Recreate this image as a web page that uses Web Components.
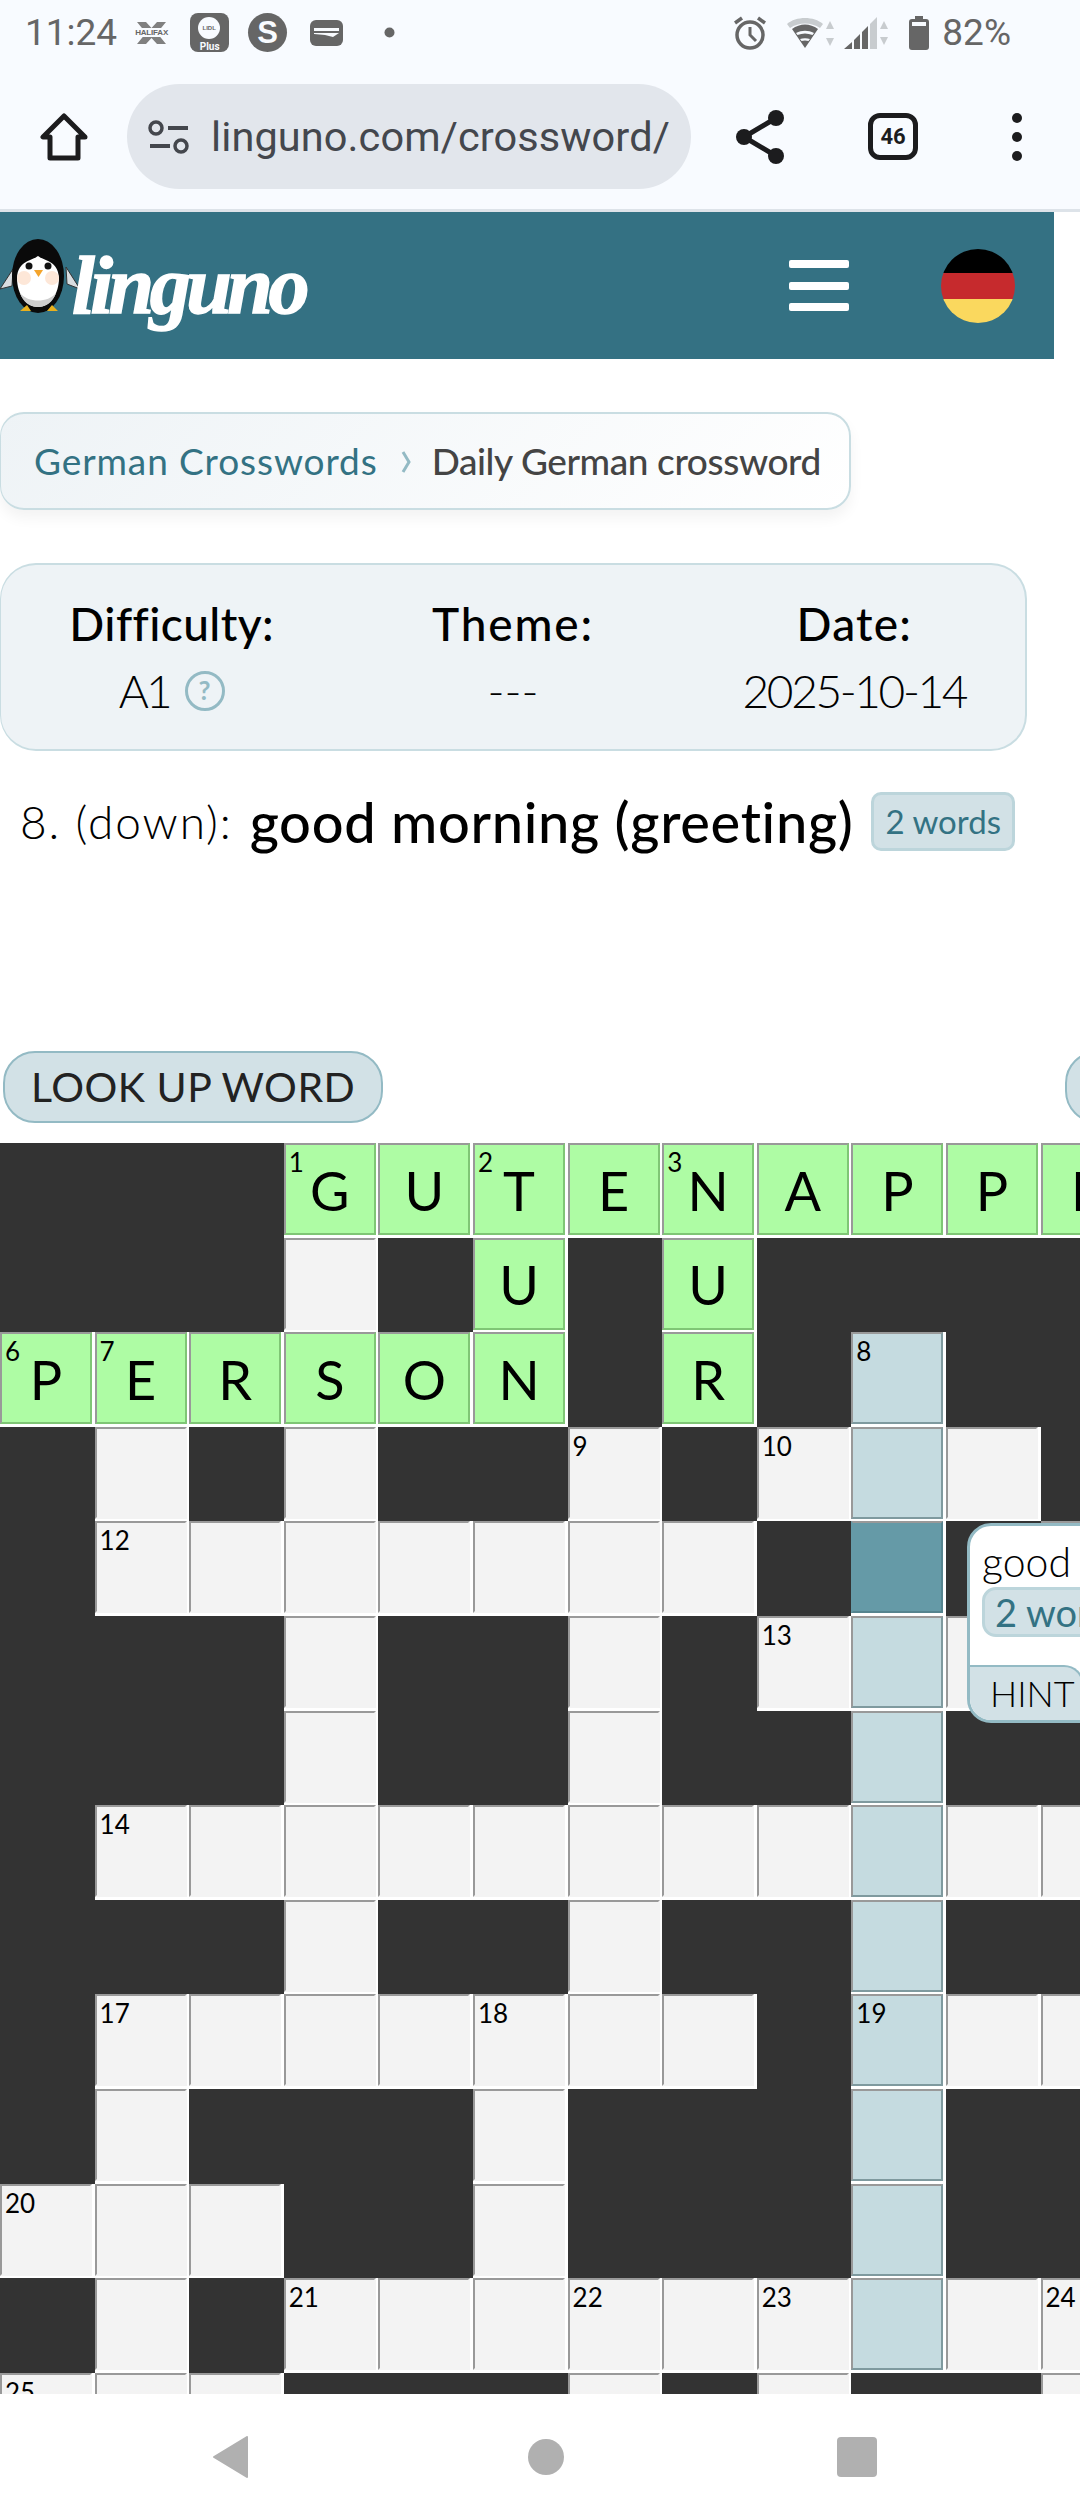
<!DOCTYPE html>
<html>
<head>
<meta charset="utf-8">
<style>
html, body { margin: 0; padding: 0; background: #fff; }
body { width: 1080px; height: 2520px; overflow: hidden; display: flex; flex-direction: column; font-family: "Lato", "Noto Sans", sans-serif; color: #000; }
x-page { display: block; flex: 1; min-height: 0; overflow: hidden; }
</style>
</head>
<body>
<x-statusbar></x-statusbar>
<x-toolbar></x-toolbar>
<x-page>
    <x-siteheader></x-siteheader>
    <x-breadcrumbs></x-breadcrumbs>
    <x-infobox></x-infobox>
    <x-clue></x-clue>
    <x-actions></x-actions>
    <x-crossword></x-crossword>
</x-page>
<x-navbar></x-navbar>
<script>
class XStatusbar extends HTMLElement {
    connectedCallback() {
        this.attachShadow({ mode: 'open' });
        this.shadowRoot.innerHTML = `
            <style>
                :host { display: flex; align-items: center; height: 65px; background: #f8fbff; color: #666; font-family: "Roboto", sans-serif; font-size: 37px; position: relative; }
                .left, .right { display: flex; align-items: center; }
                .left { padding-left: 25px; }
                .right { margin-left: auto; padding-right: 69px; }
                svg { display: block; flex: none; }
                .hal { position: relative; width: 33px; height: 22px; margin-left: 18px; }
                .hal span { position: absolute; left: 0; right: 0; top: 6px; text-align: center; font: bold 8px "Liberation Sans", sans-serif; background: #f8fbff; color: #666; letter-spacing: -.2px; }
                .lidl { position: relative; margin-left: 22px; width: 39px; height: 39px; background: #666; border-radius: 8px; }
                .lidl i { position: absolute; left: 8px; top: 4px; width: 22px; height: 22px; background: #f8fbff; border-radius: 50%; font: bold 6px/22px "Liberation Sans", sans-serif; color: #666; text-align: center; }
                .lidl b { position: absolute; left: 0; right: 0; bottom: 0; text-align: center; font: bold 10px "Roboto", sans-serif; color: #f8fbff; }
                .s { margin-left: 19px; width: 39px; height: 39px; border-radius: 50%; background: #666; color: #f8fbff; font: bold 31px/39px "Liberation Sans", sans-serif; text-align: center; }
            </style>
            <div class="left">
                <span>11:24</span>
                <div class="hal">
                    <svg width="33" height="22" viewBox="0 0 33 22"><path d="M2 0h9l5.500 6 5.500-6h9L22 11l9 11h-9l-5.500-6-5.500 6H2l9-11z" fill="#808080"/></svg>
                    <span>HALIFAX</span>
                </div>
                <div class="lidl"><i>LIDL</i><b>Plus</b></div>
                <div class="s">S</div>
                <svg style="margin-left:23px" width="33" height="26" viewBox="0 0 33 26"><rect width="33" height="26" rx="6" fill="#666"/><path d="M4 8h25v3H4zM4 13h25l-6 4-8-2-11-1z" fill="#f8fbff"/></svg>
                <svg style="margin-left:41px" width="11" height="11" viewBox="0 0 11 11"><circle cx="5.500" cy="5.500" r="5" fill="#666"/></svg>
            </div>
            <div class="right">
                <svg width="32" height="34" viewBox="0 0 32 34"><circle cx="16" cy="19" r="13" fill="none" stroke="#666" stroke-width="3.500"/><path d="M16 11v8l6 6" fill="none" stroke="#666" stroke-width="3"/><path d="M1 7l7-5M31 7l-7-5" stroke="#666" stroke-width="3.500"/></svg>
                <svg style="margin-left:21px" width="48" height="32" viewBox="0 0 48 32"><path d="M0 7C9-1 27-1 36 7l-3 4C24 5 12 5 3 11z" fill="#c8cccf"/><path d="M5 12c8-6 18-6 26 0L18 31z" fill="#666"/><path d="M9 16c6-3 12-3 18 0l-1.500 2c-5-2-10-2-15 0zM13 22c3-1 7-1 10 0l-1.500 2c-2-.7-5-.7-7 0z" fill="#f8fbff"/><path d="M43 4l4 8h-8zM43 29l4-8h-8z" fill="#c8cccf"/></svg>
                <svg style="margin-left:9px" width="45" height="34" viewBox="0 0 45 34"><path d="M0 33L8 26v7zM10 24l6-6v15h-6zM18 16l6-6v23h-6z" fill="#666"/><path d="M26 8l7-7v32h-7z" fill="#c8cccf"/><path d="M40 5l4 8h-8zM40 29l4-8h-8z" fill="#c8cccf"/></svg>
                <svg style="margin-left:20px" width="20" height="34" viewBox="0 0 20 34"><path d="M6 0h8v3h3a3 3 0 0 1 3 3v25a3 3 0 0 1-3 3H3a3 3 0 0 1-3-3V6a3 3 0 0 1 3-3h3z" fill="#666"/><rect x="3" y="6" width="14" height="4" fill="#f8fbff"/></svg>
                <span style="margin-left:13px">82%</span>
            </div>
        `;
    }
}

class XToolbar extends HTMLElement {
    connectedCallback() {
        this.attachShadow({ mode: 'open' });
        this.shadowRoot.innerHTML = `
            <style>
                :host { display: flex; align-items: center; box-sizing: border-box; height: 147px; padding-bottom: 1px; background: #f8fbff; border-bottom: 3px solid #dde3e9; position: relative; font-family: "Roboto", sans-serif; }
                svg { display: block; flex: none; }
                .pill { display: flex; align-items: center; margin-left: 39px; width: 564px; height: 105px; box-sizing: border-box; padding-left: 21px; border-radius: 53px; background: #e2e6ec; color: #44474d; font-size: 41.500px; letter-spacing: .1px; white-space: nowrap; overflow: hidden; }
                .pill span { margin-left: 21px; }
                .tabs { position: relative; margin-left: 84px; width: 50px; height: 47px; box-sizing: border-box; border: 5px solid #1c1c1e; border-radius: 12px; font-weight: 700; font-size: 22px; line-height: 37px; text-align: center; color: #1c1c1e; }
            </style>
            <svg style="margin-left:40px" width="48" height="48" viewBox="0 0 48 48"><path d="M24 3L3 24h7v21h28V24h7z" fill="none" stroke="#1c1c1e" stroke-width="5" stroke-linejoin="round"/></svg>
            <div class="pill">
                <svg width="42" height="34" viewBox="0 0 42 34"><circle cx="8" cy="8" r="6" fill="none" stroke="#44474d" stroke-width="3.500"/><path d="M20 8h20M2 26h20" stroke="#44474d" stroke-width="4"/><circle cx="33" cy="26" r="6" fill="none" stroke="#44474d" stroke-width="3.500"/></svg>
                <span>linguno.com/crossword/</span>
            </div>
            <svg style="margin-left:45px" width="48" height="54" viewBox="0 0 48 54"><path d="M40 8L8 27l32 19" fill="none" stroke="#1c1c1e" stroke-width="5"/><circle cx="40" cy="8" r="8" fill="#1c1c1e"/><circle cx="8" cy="27" r="8" fill="#1c1c1e"/><circle cx="40" cy="46" r="8" fill="#1c1c1e"/></svg>
            <div class="tabs">46</div>
            <svg style="margin-left:94px" width="10" height="48" viewBox="0 0 10 48"><circle cx="5" cy="5" r="5" fill="#1c1c1e"/><circle cx="5" cy="24" r="5" fill="#1c1c1e"/><circle cx="5" cy="43" r="5" fill="#1c1c1e"/></svg>
        `;
    }
}

class XSiteheader extends HTMLElement {
    connectedCallback() {
        this.attachShadow({ mode: 'open' });
        this.shadowRoot.innerHTML = `
            <style>
                :host { display: flex; align-items: center; width: 1054px; height: 147px; background: #347183; position: relative; }
                .logo { position: relative; width: 310px; height: 147px; flex: none; }
                .logo svg { position: absolute; left: 0; top: 24px; }
                .word { position: absolute; left: 72px; top: 20px; font: italic bold 82px/108px "Liberation Serif", serif; color: #fff; letter-spacing: -4.500px; -webkit-text-stroke: 1.500px #fff; }
                .menu { margin-left: 479px; width: 60px; display: flex; flex-direction: column; gap: 13.500px; }
                .menu i { display: block; height: 8px; border-radius: 2px; background: #fff; }
                .flag { margin-left: 92px; width: 74px; height: 74px; border-radius: 50%; background: linear-gradient(#000 32.500%, #c62a2d 32.500%, #c62a2d 67.500%, #fad85e 67.500%); }
            </style>
            <div class="logo">
                <svg width="85" height="80" viewBox="0 0 85 80">
                    <path d="M13 33L0 53l12-3zM66 31l14 22-13-5z" fill="#d9dde0" stroke="#333" stroke-width="1"/>
                    <ellipse cx="38" cy="40" rx="26" ry="37" fill="#0a0a0a"/>
                    <path d="M38 20c-6 5-20 4-21 22 0 16 9 29 21 29s21-13 21-29c-1-18-15-17-21-22z" fill="#fff"/>
                    <path d="M20 57c8 10 28 10 36 0-3 9-10 14-18 14s-15-5-18-14z" fill="#cfcfcf"/>
                    <circle cx="24" cy="42" r="7" fill="#fde7d8"/><circle cx="52" cy="42" r="7" fill="#fde7d8"/>
                    <circle cx="29" cy="30" r="3.500" fill="#111"/><circle cx="48" cy="30" r="3.500" fill="#111"/>
                    <path d="M34 34h9l-4.500 7z" fill="#f4a42c"/>
                    <path d="M20 75h11l-4-6zM47 75h11l-6-6z" fill="#e8b01e"/>
                </svg>
                <span class="word">linguno</span>
            </div>
            <div class="menu"><i></i><i></i><i></i></div>
            <div class="flag"></div>
        `;
    }
}

class XBreadcrumbs extends HTMLElement {
    connectedCallback() {
        this.attachShadow({ mode: 'open' });
        this.shadowRoot.innerHTML = `
            <style>
                :host { display: flex; align-items: center; box-sizing: border-box; width: 851px; height: 98px; margin-top: 53px; padding: 0 0 2px 33px; border: 2px solid #c9dde2; border-left-width: 1px; border-radius: 24px; background: linear-gradient(135deg, #eef3f6, #fff); box-shadow: 0 8px 14px rgba(0,0,0,.05); font-size: 37px; white-space: nowrap; }
                a { color: #337283; letter-spacing: .9px; }
                svg { display: block; flex: none; margin: 4px 21px 0 23px; }
                span { color: #444; font-weight: 500; letter-spacing: -.4px; }
            </style>
            <a>German Crosswords</a>
            <svg width="10" height="24" viewBox="0 0 10 24"><path d="M2 2l6 10-6 10" fill="none" stroke="#93bac4" stroke-width="3"/></svg>
            <span>Daily German crossword</span>
        `;
    }
}

class XInfobox extends HTMLElement {
    connectedCallback() {
        this.attachShadow({ mode: 'open' });
        this.shadowRoot.innerHTML = `
            <style>
                :host { display: grid; grid-template-columns: repeat(3, 1fr); align-content: center; row-gap: 15px; box-sizing: border-box; width: 1027px; height: 188px; margin-top: 53px; border: 2px solid #c9dde2; border-left-width: 1px; border-radius: 36px; background: #eef3f6; font-size: 46px; line-height: 52px; text-align: center; }
                b { font-weight: 500; }
                b.d { letter-spacing: .4px; }
                b.t { letter-spacing: 1.800px; }
                b.a { letter-spacing: 1.200px; }
                span { font-weight: 300; display: flex; justify-content: center; align-items: center; gap: 15px; }
                span em { font-style: normal; letter-spacing: -3px; }
                span.date { letter-spacing: -2.400px; }
                i { display: inline-block; box-sizing: border-box; width: 40px; height: 40px; border: 3.500px solid #93bac4; border-radius: 50%; font: bold 26px/33px "Lato", sans-serif; color: #93bac4; }
            </style>
            <b class="d">Difficulty:</b><b class="t">Theme:</b><b class="a">Date:</b>
            <span><em>A1</em><i>?</i></span><span>---</span><span class="date">2025-10-14</span>
        `;
    }
}

class XBadge extends HTMLElement {
    connectedCallback() {
        this.attachShadow({ mode: 'open' });
        this.shadowRoot.innerHTML = `
            <style>
                :host { display: inline-block; box-sizing: border-box; height: 59px; padding: 0 11px; border: 3px solid #bcd5db; border-radius: 10px; background: #d2e1e6; color: #337283; font-size: 33px; line-height: 53px; white-space: nowrap; }
            </style>
            <slot></slot>
        `;
    }
}

class XClue extends HTMLElement {
    connectedCallback() {
        this.attachShadow({ mode: 'open' });
        this.shadowRoot.innerHTML = `
            <style>
                :host { display: flex; align-items: center; height: 59px; margin-top: 41px; padding-left: 20px; white-space: nowrap; }
                .n { font-size: 46px; font-weight: 300; letter-spacing: 1.900px; }
                .t { margin-left: 17px; font-size: 56px; font-weight: 500; letter-spacing: .65px; }
                x-badge { margin-left: 18px; }
            </style>
            <span class="n">8. (down):</span><span class="t">good morning (greeting)</span><x-badge>2 words</x-badge>
        `;
    }
}

class XPillbutton extends HTMLElement {
    connectedCallback() {
        this.attachShadow({ mode: 'open' });
        this.shadowRoot.innerHTML = `
            <style>
                :host { display: block; flex: none; box-sizing: border-box; height: 72px; padding: 0 26px; border: 2px solid #93bac4; border-radius: 32px; background: #d2e1e6; color: #222; font-size: 41px; letter-spacing: .5px; line-height: 68px; white-space: nowrap; }
            </style>
            <slot></slot>
        `;
    }
}

class XActions extends HTMLElement {
    connectedCallback() {
        this.attachShadow({ mode: 'open' });
        this.shadowRoot.innerHTML = `
            <style>
                :host { display: flex; justify-content: space-between; width: 1277px; margin-top: 200px; padding-left: 3px; }
                x-pillbutton.next { width: 215px; }
            </style>
            <x-pillbutton>LOOK UP WORD</x-pillbutton>
            <x-pillbutton class="next"></x-pillbutton>
        `;
    }
}

class XCell extends HTMLElement {
    connectedCallback() {
        const type = this.getAttribute('t') || 'x';
        this.attachShadow({ mode: 'open' });
        this.shadowRoot.innerHTML = `
            <style>
                :host { display: block; position: relative; box-sizing: border-box; min-width: 0; min-height: 0; background: #333; }
                :host([t="w"]), :host([t="g"]), :host([t="b"]), :host([t="a"]) { background: #fff; padding: 0 2.500px 2.500px 0; }
                .in { display: flex; align-items: center; justify-content: center; box-sizing: border-box; height: 100%; padding-top: 3px; border-style: solid; border-width: 2px; border-top-color: #999; border-left-color: #999; font-size: 54px; line-height: 1; color: #000; }
                :host([t="w"]) .in { background: #f3f3f3; border-right-color: #f3f3f3; border-bottom-color: #f3f3f3; }
                :host([t="g"]) .in { background: #aefca4; border-right-color: #7fc675; border-bottom-color: #7fc675; }
                :host([t="b"]) .in { background: #c5dbe0; border-right-color: #7f9a9f; border-bottom-color: #7f9a9f; }
                :host([t="a"]) .in { background: #659aa7; border-color: #659aa7 #55848f #55848f #659aa7; border-top-color: #999; }
                sup { position: absolute; left: 5px; top: 6px; font-size: 26px; line-height: 26px; vertical-align: baseline; }
            </style>
            ${type === 'x' ? '' : `<div class="in">${this.getAttribute('l') || ''}</div>`}
            ${this.getAttribute('n') ? `<sup>${this.getAttribute('n')}</sup>` : ''}
        `;
    }
}

class XHintpopup extends HTMLElement {
    connectedCallback() {
        this.attachShadow({ mode: 'open' });
        this.shadowRoot.innerHTML = `
            <style>
                :host { display: flex; flex-direction: column; position: absolute; left: 967px; top: 380px; width: 400px; height: 200px; box-sizing: border-box; border: 3px solid #93bac4; border-radius: 24px; background: #fff; overflow: hidden; }
                .top { flex: 1; padding: 14px 12px 0; }
                .w { font-size: 41px; font-weight: 300; line-height: 44px; margin-bottom: 3px; }
                x-badge { height: 50px; line-height: 44px; padding: 0 10px; font-size: 38px; border-radius: 14px; }
                .hint { width: 114px; height: 55px; box-sizing: border-box; border-top: 2px solid #93bac4; border-right: 2px solid #93bac4; border-top-right-radius: 20px; background: #d2e1e6; padding-left: 20px; font-size: 36px; font-weight: 300; line-height: 52px; }
            </style>
            <div class="top"><div class="w">good</div><x-badge>2 words</x-badge></div>
            <div class="hint">HINT</div>
        `;
    }
}

const CELLS = [
    'x x x G1 U T2 E N3 A P P E',
    'x x x w x g:U x g:U x x x x',
    'P6 E7 R S O N x g:R x b8 x x',
    'x w x w x x w9 x w10 b w x',
    'x w12 w w w w w w x a x w',
    'x x x w x x w x w13 b w x',
    'x x x w x x w x x b x x',
    'x w14 w w w w w w w b w w',
    'x x x w x x w x x b x x',
    'x w17 w w w w18 w w x b19 w w',
    'x w x x x w x x x b x x',
    'w20 w w x x w x x x b x x',
    'x w x w21 w w w22 w w23 b w w24',
    'w25 w w x x x w x w x x w'
];

class XCrossword extends HTMLElement {
    connectedCallback() {
        this.attachShadow({ mode: 'open' });
        let cells = '';
        CELLS.forEach((row) => {
            row.split(' ').forEach((c) => {
                let m;
                if (m = c.match(/^g:(.)$/)) cells += `<x-cell t="g" l="${m[1]}"></x-cell>`;
                else if (m = c.match(/^([A-Z])(\d*)$/)) cells += `<x-cell t="g" l="${m[1]}" n="${m[2]}"></x-cell>`;
                else if (m = c.match(/^w(\d*)$/)) cells += `<x-cell t="w" n="${m[1]}"></x-cell>`;
                else if (m = c.match(/^b(\d*)$/)) cells += `<x-cell t="b" n="${m[1]}"></x-cell>`;
                else if (c === 'a') cells += `<x-cell t="a"></x-cell>`;
                else cells += `<x-cell t="x"></x-cell>`;
            });
        });
        this.shadowRoot.innerHTML = `
            <style>
                :host { display: block; position: relative; margin-top: 20px; height: 1251px; overflow: hidden; }
                .grid { display: grid; grid-template-columns: repeat(12, 94.600px); grid-auto-rows: 94.600px; width: 1135.200px; }
            </style>
            <div class="grid">${cells}</div>
            <x-hintpopup></x-hintpopup>
        `;
    }
}

class XNavbar extends HTMLElement {
    connectedCallback() {
        this.attachShadow({ mode: 'open' });
        this.shadowRoot.innerHTML = `
            <style>
                :host { display: flex; align-items: center; height: 126px; background: #fff; padding-left: 213px; box-sizing: border-box; }
                svg { display: block; flex: none; }
            </style>
            <svg width="36" height="42" viewBox="0 0 36 42"><path d="M34 1v40L1 21z" fill="#b0b0b0" stroke="#b0b0b0" stroke-width="2" stroke-linejoin="round"/></svg>
            <svg style="margin-left:279px" width="36" height="36" viewBox="0 0 36 36"><circle cx="18" cy="18" r="18" fill="#b0b0b0"/></svg>
            <svg style="margin-left:273px" width="40" height="40" viewBox="0 0 40 40"><rect width="40" height="40" rx="4" fill="#b0b0b0"/></svg>
        `;
    }
}

customElements.define('x-statusbar', XStatusbar);
customElements.define('x-toolbar', XToolbar);
customElements.define('x-siteheader', XSiteheader);
customElements.define('x-breadcrumbs', XBreadcrumbs);
customElements.define('x-infobox', XInfobox);
customElements.define('x-badge', XBadge);
customElements.define('x-clue', XClue);
customElements.define('x-pillbutton', XPillbutton);
customElements.define('x-actions', XActions);
customElements.define('x-cell', XCell);
customElements.define('x-hintpopup', XHintpopup);
customElements.define('x-crossword', XCrossword);
customElements.define('x-navbar', XNavbar);
</script>
</body>
</html>
